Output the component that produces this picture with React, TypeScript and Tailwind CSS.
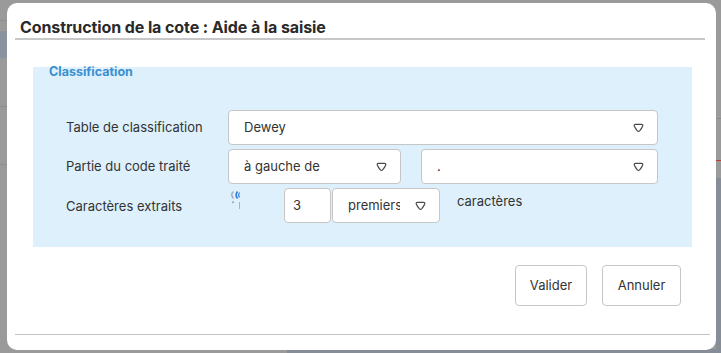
import React from "react";

const Chevron = () => (
  <svg width="11" height="10" viewBox="0 0 11 10" fill="none" className="shrink-0">
    <path
      d="M2.6 1.3 H8.4 Q10.3 1.3 9.6 3.2 Q8.6 5.6 6.6 7.9 Q5.5 9 4.4 7.9 Q2.4 5.6 1.4 3.2 Q0.7 1.3 2.6 1.3 Z"
      stroke="#4a4a4a"
      strokeWidth="1.25"
      strokeLinejoin="round"
    />
  </svg>
);

const Select = ({ value, className }: { value: string; className: string }) => (
  <div
    className={
      "flex items-center justify-between rounded-[4px] border border-[#c6c6c6] bg-white pl-[15px] pr-[13px] " +
      className
    }
  >
    <span className="overflow-hidden whitespace-nowrap text-[13px] text-[#333]">{value}</span>
    <Chevron />
  </div>
);

const BrokenIcon = () => (
  <svg width="14" height="19" viewBox="0 0 14 19" fill="none">
    <path d="M4.5 1.5 Q1 4.5 4.5 8.5" stroke="#a4acb5" strokeWidth="1.5" fill="none" />
    <path d="M8.5 1.5 Q5.8 4.8 8.5 8.5" stroke="#2f7de0" strokeWidth="1.7" fill="none" />
    <path d="M10.5 2.5 Q8.8 5 10.5 7.5" stroke="#2f7de0" strokeWidth="1.1" fill="none" />
    <rect x="3.3" y="11.5" width="1.4" height="1.4" fill="#777" />
    <rect x="10" y="12" width="1" height="7" fill="#e3a774" />
  </svg>
);

export default function App() {
  return (
    <div
      className="relative h-[353px] w-[721px] overflow-hidden bg-[#9a9a9a] pl-[7px] pt-[3px]"
      style={{ fontFamily: "Inter, 'Open Sans', sans-serif" }}
    >
      {/* background page remnants */}
      <div className="absolute left-0 top-[20px] h-px w-[7px] bg-[#8c8c8c]" />
      <div className="absolute left-0 top-[31px] h-[27px] w-[7px] bg-[#8a929d]" />
      <div className="absolute left-0 top-[106px] h-px w-[7px] bg-[#8c8c8c]" />
      <div className="absolute left-0 top-[164px] h-px w-[7px] bg-[#8c8c8c]" />
      <div className="absolute right-0 top-[118px] h-px w-[5px] bg-[#8c8c8c]" />
      <div className="absolute right-0 top-[160px] h-px w-[5px] bg-[#c0392b]" />
      <div className="absolute right-0 top-[178px] h-[175px] w-[5px] bg-[#868d96]" />
      <div className="absolute bottom-0 left-[287px] h-[4px] w-[434px] bg-[#868d96]" />

      <div className="relative flex h-[347px] w-[709px] flex-col rounded-[10px] bg-white">
        {/* header */}
        <div className="pl-[13px] pt-[14px] text-[16px] font-bold leading-[20px] tracking-[-0.1px] text-[#2a2a2a]">
          Construction de la cote : Aide à la saisie
        </div>
        <div className="ml-[8px] mr-[11px] mt-[1px] h-[2px] bg-[#c7c7c7]" />

        {/* panel */}
        <div className="ml-[26px] mr-[24px] mt-[27px] flex h-[180px] flex-col bg-[#ddf0fb] pb-[24px] pl-[33px] pr-[34px]">
          <div className="-ml-[17px] mt-[-2px] text-[12.5px] font-bold leading-[14px] text-[#3a8fd2]">
            Classification
          </div>
          <div className="mt-[31px] flex flex-col gap-[4px]">
            <div className="flex h-[35px] items-center">
              <div className="w-[162px] pt-[1px] text-[13px] text-[#333]">Table de classification</div>
              <Select value="Dewey" className="h-[35px] flex-1" />
            </div>
            <div className="flex h-[35px] items-center">
              <div className="w-[162px] pt-[1px] text-[13px] text-[#333]">Partie du code traité</div>
              <Select value="à gauche de" className="h-[35px] w-[173px]" />
              <Select value="." className="ml-[20px] h-[35px] flex-1" />
            </div>
            <div className="flex h-[35px] items-start">
              <div className="flex h-[35px] w-[162px] items-center pt-[2px] text-[13px] text-[#333]">
                Caractères extraits
              </div>
              <div className="ml-[1px] mt-[2px] w-[55px]">
                <BrokenIcon />
              </div>
              <div className="flex h-[35px] w-[47px] items-center rounded-[4px] border border-[#c6c6c6] bg-white pl-[8px] text-[13px] text-[#333]">
                3
              </div>
              <Select value="premiers" className="ml-[1px] h-[35px] w-[108px] [&>span]:w-[52px]" />
              <div className="ml-[17px] mt-[4px] text-[13px] text-[#333]">caractères</div>
            </div>
          </div>
        </div>

        {/* buttons */}
        <div className="mr-[35px] mt-[18px] flex justify-end gap-[15px]">
          <button className="h-[41px] w-[72px] rounded-[4px] border border-[#c6c6c6] bg-white text-[13px] text-[#333]">
            Valider
          </button>
          <button className="h-[41px] w-[79px] rounded-[4px] border border-[#c6c6c6] bg-white text-[13px] text-[#333]">
            Annuler
          </button>
        </div>

        <div className="ml-[8px] mr-[6px] mt-[28px] h-px bg-[#c4c4c4]" />
      </div>
    </div>
  );
}
